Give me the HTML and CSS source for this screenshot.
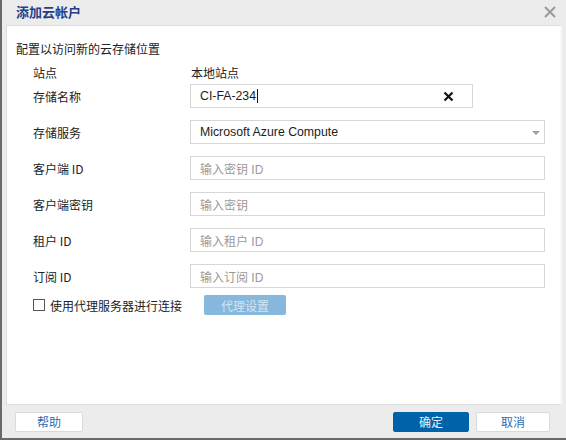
FILE: index.html
```html
<!DOCTYPE html>
<html lang="zh-CN">
<head>
<meta charset="utf-8">
<title>添加云帐户</title>
<link rel="stylesheet" href="styles.css">
</head>
<body>
<div class="dialog">
  <div class="titlebar">
    <span class="title">添加云帐户</span>
    <svg class="close" width="12" height="12" viewBox="0 0 12 12"><path d="M1 1L11 11M11 1L1 11" stroke="#9a9a9a" stroke-width="2" fill="none"/></svg>
  </div>
  <div class="panel">
    <div class="intro">配置以访问新的云存储位置</div>
    <div class="form">
      <div class="row row-site">
        <span class="label">站点</span>
        <span class="value">本地站点</span>
      </div>
      <div class="row">
        <span class="label">存储名称</span>
        <div class="input input-short">
          <span class="text">CI-FA-234</span><span class="caret"></span>
          <svg class="clear" width="11" height="11" viewBox="0 0 11 11"><path d="M1.5 1.5L9.5 9.5M9.5 1.5L1.5 9.5" stroke="#111" stroke-width="2.2" fill="none"/></svg>
        </div>
      </div>
      <div class="row">
        <span class="label">存储服务</span>
        <div class="input select">
          <span class="text">Microsoft Azure Compute</span>
          <span class="arrow"></span>
        </div>
      </div>
      <div class="row">
        <span class="label">客户端 ID</span>
        <div class="input"><span class="placeholder">输入密钥 ID</span></div>
      </div>
      <div class="row">
        <span class="label">客户端密钥</span>
        <div class="input"><span class="placeholder">输入密钥</span></div>
      </div>
      <div class="row">
        <span class="label">租户 ID</span>
        <div class="input"><span class="placeholder">输入租户 ID</span></div>
      </div>
      <div class="row">
        <span class="label">订阅 ID</span>
        <div class="input"><span class="placeholder">输入订阅 ID</span></div>
      </div>
      <div class="row row-proxy">
        <label class="check"><span class="box"></span><span>使用代理服务器进行连接</span></label>
        <span class="btn-proxy">代理设置</span>
      </div>
    </div>
  </div>
  <div class="footer">
    <span class="btn btn-help">帮助</span>
    <div class="footer-right">
      <span class="btn btn-ok">确定</span>
      <span class="btn btn-cancel">取消</span>
    </div>
  </div>
</div>
</body>
</html>
```
FILE: styles.css
```css
html, body {
  margin: 0;
  padding: 0;
  background: #ececec;
}
body {
  font-family: "Liberation Sans", "Noto Sans CJK SC", sans-serif;
  font-size: 12px;
  color: #222;
}
.dialog {
  width: 566px;
  height: 440px;
  box-sizing: border-box;
  border-left: 2px solid #6a6a6a;
  border-bottom: 2px solid #6a6a6a;
  background: #ececec;
  display: flex;
  flex-direction: column;
}
.titlebar {
  height: 25px;
  display: flex;
  align-items: center;
  justify-content: space-between;
  padding: 0 10px 0 14px;
  flex: none;
}
.title {
  font-family: "Noto Sans CJK SC", sans-serif;
  font-weight: bold;
  font-size: 13px;
  color: #263e86;
  margin-top: -2px;
}
.close {
  margin-top: -2px;
}
.panel {
  flex: 1;
  margin: 0 4px 0 4px;
  background: #fff;
  border: 1px solid #dcdcdc;
  border-right: 2px solid #f8f8f8;
  padding: 15px 15px 0 9px;
}
.intro {
  font-family: "Noto Sans CJK SC", sans-serif;
  line-height: 16px;
  height: 16px;
}
.form {
  display: flex;
  flex-direction: column;
  padding-left: 17px;
  margin-top: 7px;
}
.row {
  display: flex;
  align-items: center;
  height: 24px;
  margin-top: 12px;
}
.row-site {
  height: 16px;
  margin-top: 0;
  margin-bottom: -8px;
}
.label {
  width: 157px;
  flex: none;
  font-family: "Noto Sans CJK SC", sans-serif;
}
.value {
  font-family: "Noto Sans CJK SC", sans-serif;
  margin-left: 1px;
}
.input {
  flex: 1;
  height: 24px;
  box-sizing: border-box;
  border: 1px solid #d6d6d6;
  display: flex;
  align-items: center;
  padding-left: 9px;
  position: relative;
}
.input-short {
  flex: none;
  width: 283px;
}
.text {
  color: #1c1c1c;
  font-size: 12.3px;
}
.caret {
  width: 1px;
  height: 14px;
  background: #111;
  margin-left: 1px;
}
.clear {
  position: absolute;
  right: 18px;
  top: 6px;
}
.select .arrow {
  position: absolute;
  right: 4px;
  top: 10px;
  width: 0;
  height: 0;
  border-left: 4px solid transparent;
  border-right: 4px solid transparent;
  border-top: 4px solid #a0a0a0;
}
.placeholder {
  color: #9a9a9a;
  font-family: "Liberation Sans", "Noto Sans CJK SC", sans-serif;
}
.row-proxy {
  margin-top: 7px;
  height: 20px;
}
.check {
  display: flex;
  align-items: center;
  width: 171px;
  flex: none;
  font-family: "Noto Sans CJK SC", sans-serif;
}
.box {
  width: 12px;
  height: 12px;
  box-sizing: border-box;
  border: 1px solid #555;
  background: #fff;
  margin-right: 5px;
}
.btn-proxy {
  width: 82px;
  height: 20px;
  background: #86b8de;
  color: #d4e5f3;
  border-radius: 2px;
  display: flex;
  align-items: center;
  justify-content: center;
  font-family: "Noto Sans CJK SC", sans-serif;
  font-size: 12px;
}
.footer {
  height: 33px;
  flex: none;
  display: flex;
  align-items: center;
  justify-content: space-between;
  padding: 0 16px 0 13px;
}
.footer-right {
  display: flex;
  gap: 7px;
}
.btn {
  height: 20px;
  box-sizing: border-box;
  border: 1px solid #dadada;
  background: #fff;
  color: #1f6fb5;
  display: flex;
  align-items: center;
  justify-content: center;
  font-family: "Noto Sans CJK SC", sans-serif;
  font-size: 12px;
  border-radius: 2px;
}
.btn-help {
  width: 68px;
}
.btn-ok {
  width: 76px;
  background: #0063a9;
  border-color: #0063a9;
  color: #e6f0f8;
}
.btn-cancel {
  width: 74px;
}
```
